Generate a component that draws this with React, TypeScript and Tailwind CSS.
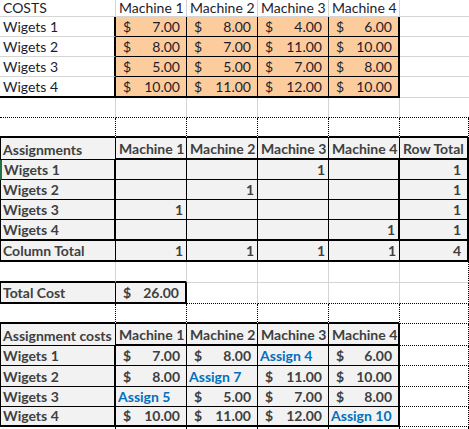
import React from 'react';

type Bd = 'g' | 'k' | 'K' | 'd' | 'n';
type Kind = 'label' | 'acc' | 'int' | 'assign' | 'empty';
type Cell = {
  t?: string;
  kind: Kind;
  bold?: boolean;
  fill?: 'o' | 's' | 'w';
  r: Bd;
  b: Bd;
  l?: 'k' | 'green';
};

const RB: Record<Bd, string> = {
  g: 'border-r border-r-[#d4d4d4]',
  k: 'border-r border-r-black',
  K: 'border-r-2 border-r-black',
  d: 'border-r border-r-black [border-right-style:dotted]!',
  n: '',
};
const BB: Record<Bd, string> = {
  g: 'border-b border-b-[#d4d4d4]',
  k: 'border-b border-b-black',
  K: 'border-b-2 border-b-black',
  d: 'border-b border-b-black [border-bottom-style:dotted]!',
  n: '',
};

const split = (s: string) => s.split('') as Bd[];

function mkRow(
  texts: (string | [Kind, string] | null)[],
  r: string,
  b: string,
  opts: { bold?: boolean; fill?: ('o' | 's' | 'w')[]; leftA?: 'k' | 'green' } = {}
): Cell[] {
  const rs = split(r);
  const bs = split(b);
  return rs.map((rr, i) => {
    const tx = texts[i];
    let kind: Kind = 'empty';
    let t: string | undefined;
    if (typeof tx === 'string') {
      kind = tx === '' ? 'empty' : 'label';
      t = tx;
    } else if (Array.isArray(tx)) {
      kind = tx[0];
      t = tx[1];
    }
    return {
      t,
      kind,
      bold: opts.bold,
      fill: opts.fill ? opts.fill[i] : 'w',
      r: rr,
      b: bs[i],
      l: i === 0 ? opts.leftA : undefined,
    };
  });
}

const acc = (v: string): [Kind, string] => ['acc', v];
const num = (v: string): [Kind, string] => ['int', v];
const asg = (v: string): [Kind, string] => ['assign', v];

const O: ('o' | 's' | 'w')[] = ['w', 'o', 'o', 'o', 'o', 'w'];
const S6: ('o' | 's' | 'w')[] = ['s', 's', 's', 's', 's', 's'];
const S5: ('o' | 's' | 'w')[] = ['s', 's', 's', 's', 's', 'w'];
const S2: ('o' | 's' | 'w')[] = ['s', 's', 'w', 'w', 'w', 'w'];

const costs = [
  ['7.00', '8.00', '4.00', '6.00'],
  ['8.00', '7.00', '11.00', '10.00'],
  ['5.00', '5.00', '7.00', '8.00'],
  ['10.00', '11.00', '12.00', '10.00'],
];

const rows: Cell[][] = [
  mkRow(['COSTS', 'Machine 1', 'Machine 2', 'Machine 3', 'Machine 4', ''], 'gggggn', 'gggggg'),
  ...costs.map((c, i) =>
    mkRow(
      [`Wigets ${i + 1}`, acc(c[0]), acc(c[1]), acc(c[2]), acc(c[3]), ''],
      'KkkkKn',
      i === 3 ? 'KKKKKg' : 'gkkkkg',
      { fill: O }
    )
  ),
  mkRow([], 'gggggn', 'dddddd'),
  mkRow([], 'dddddd', 'KKKKKK'),
  mkRow(['Assignments', 'Machine 1', 'Machine 2', 'Machine 3', 'Machine 4', 'Row Total'], 'kkkkkK', 'kKKKKK', {
    bold: true,
    fill: S6,
    leftA: 'k',
  }),
  mkRow(['Wigets 1', '', '', num('1'), '', num('1')], 'KkkkKK', 'kkkkkk', { bold: true, fill: S6, leftA: 'green' }),
  mkRow(['Wigets 2', '', num('1'), '', '', num('1')], 'KkkkKK', 'kkkkkk', { bold: true, fill: S6, leftA: 'k' }),
  mkRow(['Wigets 3', num('1'), '', '', '', num('1')], 'KkkkKK', 'kkkkkk', { bold: true, fill: S6, leftA: 'k' }),
  mkRow(['Wigets 4', '', '', '', num('1'), num('1')], 'KkkkKK', 'KKKKKK', { bold: true, fill: S6, leftA: 'k' }),
  mkRow(['Column Total', num('1'), num('1'), num('1'), num('1'), num('4')], 'kkkkkK', 'KKKKKK', {
    bold: true,
    fill: S6,
    leftA: 'k',
  }),
  mkRow([], 'gggggd', 'KKgggg'),
  mkRow(['Total Cost', acc('26.00')], 'kKgggd', 'KKdddd', { bold: true, fill: S2, leftA: 'k' }),
  mkRow([], 'dddddd', 'KKKKKd'),
  mkRow(['Assignment costs', 'Machine 1', 'Machine 2', 'Machine 3', 'Machine 4', ''], 'kkkkKd', 'kKKKKd', {
    bold: true,
    fill: S5,
    leftA: 'k',
  }),
  mkRow(['Wigets 1', acc('7.00'), acc('8.00'), asg('Assign 4'), acc('6.00'), ''], 'KkkkKd', 'kkkkkd', {
    bold: true,
    fill: S5,
    leftA: 'k',
  }),
  mkRow(['Wigets 2', acc('8.00'), asg('Assign 7'), acc('11.00'), acc('10.00'), ''], 'KkkkKd', 'kkkkkd', {
    bold: true,
    fill: S5,
    leftA: 'k',
  }),
  mkRow(['Wigets 3', asg('Assign 5'), acc('5.00'), acc('7.00'), acc('8.00'), ''], 'KkkkKd', 'kkkkkd', {
    bold: true,
    fill: S5,
    leftA: 'k',
  }),
  mkRow(['Wigets 4', acc('10.00'), acc('11.00'), acc('12.00'), asg('Assign 10'), ''], 'KkkkKd', 'KKKKKd', {
    bold: true,
    fill: S5,
    leftA: 'k',
  }),
  mkRow([], 'dddddd', 'nnnnnn'),
];

function CellView({ c, col, ri }: { c: Cell; col: number; ri: number }) {
  const fill = c.fill === 'o' ? 'bg-[#fccc9c]' : c.fill === 's' ? 'bg-[#f2f2f2]' : 'bg-white';
  const left =
    c.l === 'k' ? 'border-l border-l-black' : c.l === 'green' ? 'border-l-2 border-l-[#217346]' : '';
  const weight = c.bold ? 'font-bold text-[#3f3f3f]' : 'font-normal text-[#1c1c2e]';
  const lh = ri === 0 ? 'leading-[16px]' : 'leading-[18px]';
  const base = `flex items-end whitespace-nowrap ${lh} ${fill} ${RB[c.r]} ${BB[c.b]} ${left} ${weight}`;
  if (c.kind === 'acc') {
    return (
      <div className={`${base} justify-between pl-[7px] pr-[6px]`}>
        <span>$</span>
        <span>{c.t}</span>
      </div>
    );
  }
  if (c.kind === 'int') {
    return <div className={`${base} justify-end ${col === 5 ? 'pr-[6px]' : 'pr-[3px]'}`}>{c.t}</div>;
  }
  if (c.kind === 'assign') {
    return (
      <div className={`${base} pl-[2px]`}>
        <span className="text-[#0070c0]">{c.t}</span>
      </div>
    );
  }
  return <div className={`${base} ${c.l ? 'pl-[2px]' : 'pl-[3px]'}`}>{c.t ?? ''}</div>;
}

export default function App() {
  return (
    <div className="w-[469px] h-[429px] overflow-hidden bg-white [font-family:Lato,'Liberation_Sans',sans-serif] text-[14px]">
      <div className="grid grid-cols-[116px_71px_71px_71px_71px_69px] grid-rows-[17px_20px_20px_20px_21px_20px_20px_22px_20px_20px_20px_21px_21px_21px_21px_20px_22px_20px_21px_20px_20px_10px]">
        {rows.map((row, ri) => row.map((c, ci) => <CellView key={`${ri}-${ci}`} c={c} col={ci} ri={ri} />))}
      </div>
    </div>
  );
}
